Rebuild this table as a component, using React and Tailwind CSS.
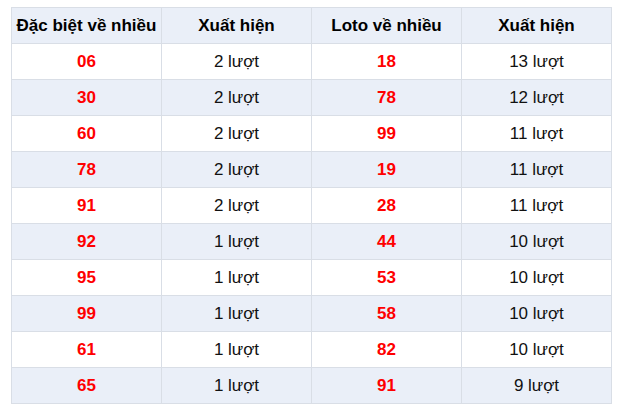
const rows = [
  ["06", "2 lượt", "18", "13 lượt"],
  ["30", "2 lượt", "78", "12 lượt"],
  ["60", "2 lượt", "99", "11 lượt"],
  ["78", "2 lượt", "19", "11 lượt"],
  ["91", "2 lượt", "28", "11 lượt"],
  ["92", "1 lượt", "44", "10 lượt"],
  ["95", "1 lượt", "53", "10 lượt"],
  ["99", "1 lượt", "58", "10 lượt"],
  ["61", "1 lượt", "82", "10 lượt"],
  ["65", "1 lượt", "91", "9 lượt"],
];

const heads = ["Đặc biệt về nhiều", "Xuất hiện", "Loto về nhiều", "Xuất hiện"];

export default function App() {
  return (
    <div className="w-[618px] h-[410px] bg-white pt-[7px] pl-[11px] font-['Liberation_Sans',Arial,sans-serif]">
      <table className="border-collapse table-fixed w-[601px] text-[17px]">
        <thead>
          <tr className="bg-[#eaeff8] h-[36px]">
            {heads.map((h, i) => (
              <th key={i} className="w-[150px] border border-[#d9dee6] font-bold text-black text-center p-0">{h}</th>
            ))}
          </tr>
        </thead>
        <tbody>
          {rows.map((r, i) => (
            <tr key={i} className={`h-[36px] ${i % 2 ? "bg-[#eaeff8]" : "bg-white"}`}>
              <td className="border border-[#d9dee6] text-center font-bold text-[#ff0000] p-0">{r[0]}</td>
              <td className="border border-[#d9dee6] text-center text-[#111] p-0">{r[1]}</td>
              <td className="border border-[#d9dee6] text-center font-bold text-[#ff0000] p-0">{r[2]}</td>
              <td className="border border-[#d9dee6] text-center text-[#111] p-0">{r[3]}</td>
            </tr>
          ))}
        </tbody>
      </table>
    </div>
  );
}
